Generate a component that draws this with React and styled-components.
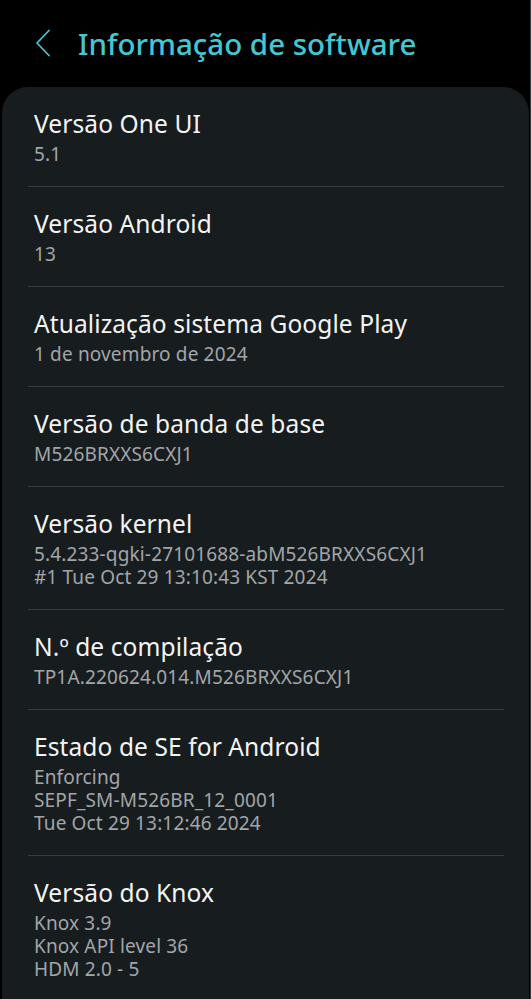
import React from 'react';
import styled, { createGlobalStyle } from 'styled-components';

const GlobalStyle = createGlobalStyle`
    html, body {
        margin:0;
        padding:0;
        background:#000;
    }
    body {
        font-family:"Noto Sans", Roboto, sans-serif;
        -webkit-font-smoothing:antialiased;
    }
`;

const Screen = styled.div`
    width:531px;
    min-height:999px;
    background:#000;
    display:flex;
    flex-direction:column;
    box-sizing:border-box;
    border-right:1px solid #3a3d3f;
    overflow:hidden;
`;

const Header = styled.header`
    height:88px;
    display:flex;
    align-items:center;
    padding:0 0 0 30px;
    box-sizing:border-box;
    gap:22px;
    margin-top:-1px;
`;

const BackButton = styled.button`
    background:none;
    border:none;
    padding:0;
    width:26px;
    height:30px;
    display:flex;
    align-items:center;
    justify-content:center;
`;

const Title = styled.h1`
    margin:0;
    font-size:29.5px;
    font-weight:500;
    color:#43c7d3;
    letter-spacing:0;
`;

const Card = styled.section`
    flex:1;
    margin:0 1px 0 2px;
    background:#171c1f;
    border-radius:26px 26px 0 0;
    padding:0 25px 0 26px;
`;

const Row = styled.div`
    padding:22px 6px 20px;
    border-bottom:${p => p.last ? 'none' : '1px solid #363c3f'};
`;

const RowTitle = styled.div`
    font-size:24.5px;
    line-height:30px;
    letter-spacing:0.1px;
    color:#f3f4f4;
    margin-bottom:4px;
`;

const RowValue = styled.div`
    font-size:19px;
    line-height:23px;
    letter-spacing:0.15px;
    color:#a2a6a8;
`;

const items = [
    { title: 'Versão One UI', values: ['5.1'] },
    { title: 'Versão Android', values: ['13'] },
    { title: 'Atualização sistema Google Play', values: ['1 de novembro de 2024'] },
    { title: 'Versão de banda de base', values: ['M526BRXXS6CXJ1'] },
    { title: 'Versão kernel', values: ['5.4.233-qgki-27101688-abM526BRXXS6CXJ1', '#1 Tue Oct 29 13:10:43 KST 2024'] },
    { title: 'N.º de compilação', values: ['TP1A.220624.014.M526BRXXS6CXJ1'] },
    { title: 'Estado de SE for Android', values: ['Enforcing', 'SEPF_SM-M526BR_12_0001', 'Tue Oct 29 13:12:46 2024'] },
    { title: 'Versão do Knox', values: ['Knox 3.9', 'Knox API level 36', 'HDM 2.0 - 5'] },
];

function ChevronLeft() {
    return (
        <svg width="18" height="28" viewBox="0 0 18 28" fill="none">
            <path d="M15 1.5 L3 14 L15 26.5" stroke="#43c7d3" strokeWidth="1.8" strokeLinecap="round" strokeLinejoin="round" />
        </svg>
    );
}

export default function App() {
    return (
        <Screen>
            <GlobalStyle />
            <Header>
                <BackButton aria-label="Voltar">
                    <ChevronLeft />
                </BackButton>
                <Title>Informação de software</Title>
            </Header>
            <Card>
                {items.map((item, i) => (
                    <Row key={item.title} last={i === items.length - 1}>
                        <RowTitle>{item.title}</RowTitle>
                        {item.values.map(v => <RowValue key={v}>{v}</RowValue>)}
                    </Row>
                ))}
            </Card>
        </Screen>
    );
}
